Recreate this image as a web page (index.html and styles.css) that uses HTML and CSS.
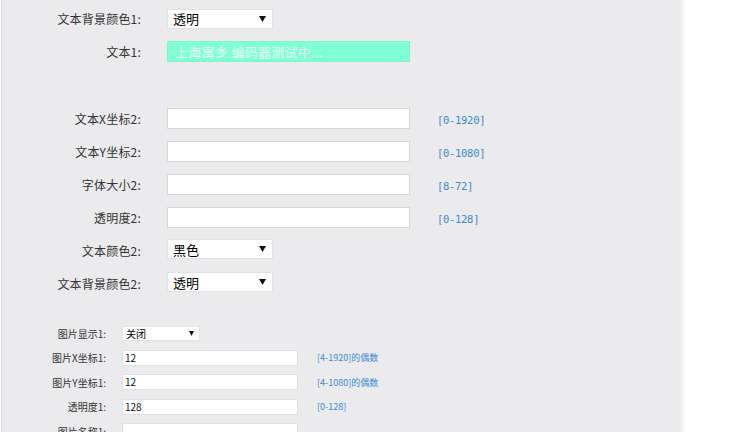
FILE: index.html
```html
<!DOCTYPE html>
<html lang="zh-CN">
<head>
<meta charset="utf-8">
<title>设置</title>
<link rel="stylesheet" href="styles.css">
</head>
<body>
<div class="panel">
  <div class="row">
    <div class="label">文本背景颜色1:</div>
    <div class="select"><span>透明</span><svg class="arrow" width="7" height="6" viewBox="0 0 7 6"><path d="M0 0H7L3.5 6Z" fill="#111"/></svg></div>
  </div>
  <div class="row">
    <div class="label">文本1:</div>
    <div class="input green">上海寓乡 编码器测试中...</div>
  </div>
  <div class="spacer"></div>
  <div class="row">
    <div class="label">文本X坐标2:</div>
    <div class="input"></div>
    <div class="hint">[0-1920]</div>
  </div>
  <div class="row">
    <div class="label">文本Y坐标2:</div>
    <div class="input"></div>
    <div class="hint">[0-1080]</div>
  </div>
  <div class="row">
    <div class="label">字体大小2:</div>
    <div class="input"></div>
    <div class="hint">[8-72]</div>
  </div>
  <div class="row">
    <div class="label">透明度2:</div>
    <div class="input"></div>
    <div class="hint">[0-128]</div>
  </div>
  <div class="row">
    <div class="label">文本颜色2:</div>
    <div class="select up"><span>黑色</span><svg class="arrow" width="7" height="6" viewBox="0 0 7 6"><path d="M0 0H7L3.5 6Z" fill="#111"/></svg></div>
  </div>
  <div class="row">
    <div class="label">文本背景颜色2:</div>
    <div class="select up"><span>透明</span><svg class="arrow" width="7" height="6" viewBox="0 0 7 6"><path d="M0 0H7L3.5 6Z" fill="#111"/></svg></div>
  </div>

  <div class="small">
    <div class="srow">
      <div class="slabel">图片显示1:</div>
      <div class="sselect"><span>关闭</span><svg class="sarrow" width="5" height="5" viewBox="0 0 5 5"><path d="M0 0H5L2.5 5Z" fill="#111"/></svg></div>
    </div>
    <div class="srow">
      <div class="slabel">图片X坐标1:</div>
      <div class="sinput">12</div>
      <div class="shint">[4-1920]的偶数</div>
    </div>
    <div class="srow">
      <div class="slabel">图片Y坐标1:</div>
      <div class="sinput">12</div>
      <div class="shint">[4-1080]的偶数</div>
    </div>
    <div class="srow">
      <div class="slabel">透明度1:</div>
      <div class="sinput">128</div>
      <div class="shint">[0-128]</div>
    </div>
    <div class="srow">
      <div class="slabel">图片名称1:</div>
      <div class="sinput"></div>
    </div>
  </div>
</div>
</body>
</html>
```

FILE: styles.css
```css
html, body {
  margin: 0;
  padding: 0;
  background: #ffffff;
  overflow: hidden;
}

body {
  font-family: "Noto Sans CJK SC", "Noto Sans", sans-serif;
  color: #333;
}

.panel {
  margin-left: 1px;
  width: 679px;
  height: 432px;
  background: #ebebed;
  border-left: 1px solid #d8d8da;
  border-right: 3px solid #f3f3f4;
  padding-top: 2px;
  box-sizing: content-box;
  overflow: hidden;
}

.row {
  display: flex;
  align-items: center;
  height: 33px;
}

.spacer {
  height: 34px;
}

.label {
  width: 139px;
  text-align: right;
  font-size: 12px;
  letter-spacing: 0.2px;
  color: #333;
  margin-right: 26px;
  white-space: nowrap;
}

.select {
  width: 106px;
  height: 20px;
  box-sizing: border-box;
  background: #fff;
  border: 1px solid #e2e2e2;
  display: flex;
  align-items: center;
  justify-content: space-between;
  padding: 0 6px 0 5px;
  font-size: 13px;
  color: #000;
}

.select.up {
  margin-bottom: 3px;
}

.input {
  width: 243px;
  height: 21px;
  box-sizing: border-box;
  background: #fff;
  border: 1px solid #d6d6d6;
  font-size: 13px;
}

.input.green {
  background: #7fffd4;
  border-color: #7cf5cc;
  color: #e8fff7;
  padding-left: 7px;
  line-height: 19px;
  letter-spacing: 0.3px;
}

.hint {
  margin-left: 27px;
  margin-top: 2px;
  font-size: 10.5px;
  color: #3a8ad8;
  font-family: "DejaVu Sans Mono", monospace;
  letter-spacing: -0.3px;
}

.small {
  margin-top: 21px;
}

.srow {
  display: flex;
  align-items: center;
  height: 24.5px;
}

.slabel {
  width: 104px;
  text-align: right;
  font-size: 10px;
  color: #333;
  margin-right: 16px;
  white-space: nowrap;
}

.sselect {
  width: 78px;
  height: 15px;
  box-sizing: border-box;
  background: #fff;
  border: 1px solid #e4e4e4;
  display: flex;
  align-items: center;
  justify-content: space-between;
  padding: 0 5px 0 3px;
  font-size: 10px;
  color: #000;
}

.sinput {
  width: 176px;
  height: 16px;
  box-sizing: border-box;
  background: #fff;
  border: 1px solid #e0e0e0;
  font-size: 10px;
  line-height: 14px;
  padding-left: 2px;
  color: #111;
}

.shint {
  margin-left: 19px;
  font-size: 9px;
  color: #3a8ad8;
  white-space: nowrap;
}
```
